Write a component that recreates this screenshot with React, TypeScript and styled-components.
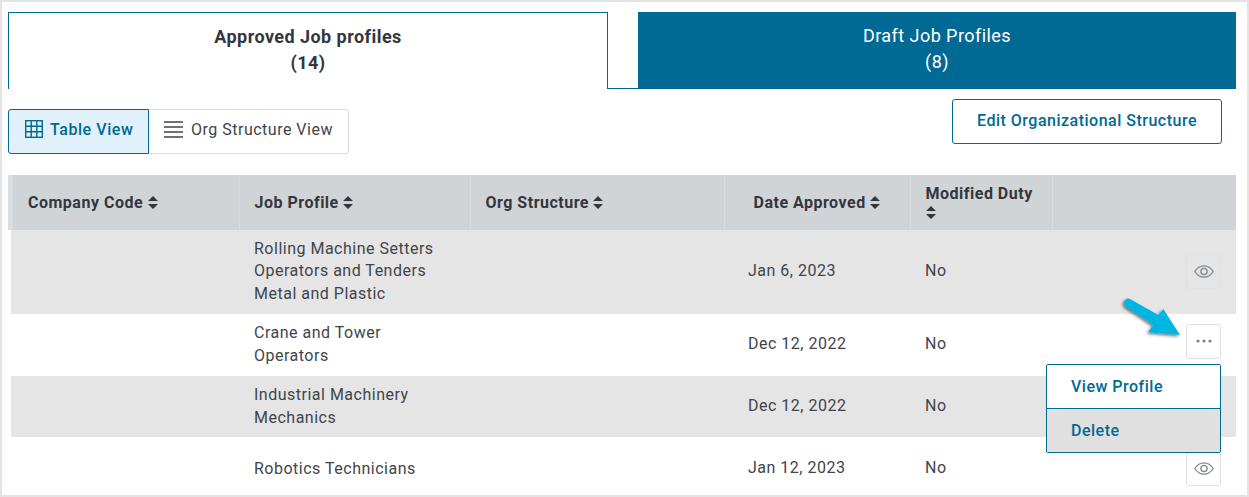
import React from "react";
import styled, { createGlobalStyle } from "styled-components";

const Global = createGlobalStyle`
  html, body { margin: 0; padding: 0; background: #fff; }
  body { font-family: Roboto, "Liberation Sans", sans-serif; color: #33373d; }
  * { box-sizing: border-box; }
`;

const Frame = styled.div`
  position: relative;
  width: 1249px;
  height: 497px;
  border: 2px solid #e3e3e3;
  padding: 10px 11px 0 6px;
  overflow: hidden;
  background: #fff;
`;

const Tabs = styled.div`
  display: flex;
  height: 77px;
`;

const ActiveTab = styled.div`
  width: 600px;
  border: 1px solid #006a94;
  border-bottom: 0;
  text-align: center;
  padding-top: 11px;
  font-size: 18px;
  line-height: 26px;
  font-weight: 700;
  letter-spacing: 0.45px;
  color: #33373d;
`;

const Gap = styled.div`
  width: 30px;
  height: 77px;
  border-bottom: 1px solid #006a94;
`;

const InactiveTab = styled.div`
  flex: 1;
  background: #006a94;
  color: #fff;
  text-align: center;
  padding-top: 11px;
  font-size: 18px;
  line-height: 26px;
  font-weight: 400;
  letter-spacing: 0.45px;
`;

const Toolbar = styled.div`
  display: flex;
  justify-content: space-between;
  align-items: flex-start;
  padding: 20px 14px 0 0;
  height: 86px;
`;

const Toggle = styled.div`
  display: flex;
`;

const ToggleButton = styled.div<{ $active?: boolean }>`
  display: flex;
  align-items: center;
  gap: ${(p) => (p.$active ? "7px" : "8px")};
  height: 45px;
  padding-bottom: 5px;
  font-size: 16px;
  letter-spacing: ${(p) => (p.$active ? "0.55px" : "0.5px")};
  padding-left: ${(p) => (p.$active ? "16px" : "15px")};
  width: ${(p) => (p.$active ? "141px" : "200px")};
  color: ${(p) => (p.$active ? "#006a94" : "#3f444a")};
  font-weight: ${(p) => (p.$active ? 500 : 400)};
  background: ${(p) => (p.$active ? "#e1f1fb" : "#fff")};
  border: 1px solid ${(p) => (p.$active ? "#006a94" : "#d9dcdf")};
  border-left-width: ${(p) => (p.$active ? "1px" : "0")};
  border-radius: ${(p) => (p.$active ? "3px 0 0 3px" : "0 3px 3px 0")};
`;

const EditButton = styled.div`
  width: 270px;
  height: 45px;
  margin-top: -10px;
  padding-bottom: 2px;
  border: 1px solid #006a94;
  border-radius: 3px;
  color: #006a94;
  font-size: 16px;
  font-weight: 500;
  letter-spacing: 0.5px;
  display: flex;
  align-items: center;
  justify-content: center;
`;

const Table = styled.table`
  width: 1228px;
  border-collapse: collapse;
  table-layout: fixed;
  font-size: 16px;
  letter-spacing: 0.5px;
`;

const HeadRow = styled.tr`
  height: 55px;
  background: #d1d4d7;
`;

const Th = styled.th<{ $pad?: number; $tight?: boolean }>`
  text-align: left;
  padding: 0 0 0 ${(p) => p.$pad ?? 15}px;
  font-size: 16px;
  line-height: ${(p) => (p.$tight ? "19px" : "22px")};
  font-weight: 700;
  color: #33373d;
  border-left: 1px solid #dadcdf;
  &:first-child {
    border-left: 0;
    padding-left: 20px;
    background: linear-gradient(to right, #dadcde 5px, #d1d4d7 5px);
  }
`;

const Row = styled.tr<{ $shade?: boolean; $h: number }>`
  height: ${(p) => p.$h}px;
  background: ${(p) => (p.$shade ? "#e5e5e5" : "#fff")};
`;

const Td = styled.td<{ $pad?: number; $dy?: number; $lh?: number }>`
  padding: ${(p) => Math.max(p.$dy ?? 0, 0) * 2}px 0 ${(p) => Math.max(-(p.$dy ?? 0), 0) * 2}px ${(p) => p.$pad ?? 15}px;
  line-height: ${(p) => p.$lh ?? 23}px;
  color: #3f444a;
  vertical-align: middle;
`;

const BlankCell = styled.td<{ $shade?: boolean }>`
  padding: 0;
  background: ${(p) => (p.$shade ? "linear-gradient(to right, #fff 3px, #e5e5e5 3px)" : "#fff")};
`;

const ActionCell = styled.td`
  padding: 0 15px 0 0;
  text-align: right;
  vertical-align: middle;
`;

const IconButton = styled.div<{ $top?: number }>`
  display: inline-flex;
  width: 35px;
  height: 35px;
  align-items: center;
  justify-content: center;
  border: 1px solid #dfe1e3;
  border-radius: 3px;
  vertical-align: middle;
  position: relative;
  top: ${(p) => p.$top ?? 0}px;
`;

const Menu = styled.div`
  position: absolute;
  left: 1044px;
  top: 362px;
  width: 175px;
  height: 89px;
  border: 1px solid #006a94;
  border-radius: 2px;
  background: #fff;
  overflow: hidden;
`;

const MenuItem = styled.div<{ $hover?: boolean }>`
  height: ${(p) => (p.$hover ? "44px" : "43px")};
  padding-left: 24px;
  display: flex;
  align-items: center;
  font-size: 16px;
  font-weight: 500;
  letter-spacing: 0.5px;
  color: #006a94;
  background: ${(p) => (p.$hover ? "#e0e0e0" : "#fff")};
  border-top: ${(p) => (p.$hover ? "1px solid #006a94" : "0")};
`;

const Arrow = styled.svg`
  position: absolute;
  left: 1118px;
  top: 292px;
  overflow: visible;
`;

const SortIcon = styled.svg`
  display: inline-block;
  vertical-align: -1px;
`;

const Sort = () => (
  <SortIcon width="10" height="13" viewBox="0 0 10 13">
    <path d="M5 0 L10 5 H0 Z M0 8 H10 L5 13 Z" fill="#33373d" />
  </SortIcon>
);

const Eye = () => (
  <svg width="20" height="13" viewBox="0 0 20 13" fill="none" stroke="#7e868c" strokeWidth="1.3">
    <path d="M0.8 6.5 C4 1.4 7.2 0.8 10 0.8 C12.8 0.8 16 1.4 19.2 6.5 C16 11.6 12.8 12.2 10 12.2 C7.2 12.2 4 11.6 0.8 6.5 Z" />
    <circle cx="10" cy="6.5" r="3.1" />
  </svg>
);

const Dots = () => (
  <svg width="16" height="4" viewBox="0 0 16 4" fill="#7d8287">
    <circle cx="2" cy="2" r="1.6" />
    <circle cx="8" cy="2" r="1.6" />
    <circle cx="14" cy="2" r="1.6" />
  </svg>
);

const GridIcon = () => (
  <svg width="18" height="18" viewBox="0 0 18 18" fill="none" stroke="#006a94" strokeWidth="1.4">
    <rect x="0.7" y="0.7" width="16.6" height="16.6" />
    <path d="M6.2 0.7 V17.3 M11.8 0.7 V17.3 M0.7 6.2 H17.3 M0.7 11.8 H17.3" />
  </svg>
);

const LinesIcon = () => (
  <svg width="19" height="17" viewBox="0 0 19 17" fill="none" stroke="#3f444a" strokeWidth="1.3">
    <path d="M0 1 H19 M0 6 H19 M0 11 H19 M0 16 H19" />
  </svg>
);

const App = () => (
  <>
    <Global />
    <Frame>
      <Tabs>
        <ActiveTab>
          Approved Job profiles
          <br />
          (14)
        </ActiveTab>
        <Gap />
        <InactiveTab>
          Draft Job Profiles
          <br />
          (8)
        </InactiveTab>
      </Tabs>
      <Toolbar>
        <Toggle>
          <ToggleButton $active>
            <GridIcon />
            Table View
          </ToggleButton>
          <ToggleButton>
            <LinesIcon />
            Org Structure View
          </ToggleButton>
        </Toggle>
        <EditButton>Edit Organizational Structure</EditButton>
      </Toolbar>
      <Table>
        <colgroup>
          <col style={{ width: 231 }} />
          <col style={{ width: 231 }} />
          <col style={{ width: 254 }} />
          <col style={{ width: 186 }} />
          <col style={{ width: 142 }} />
          <col />
        </colgroup>
        <thead>
          <HeadRow>
            <Th>
              Company Code <Sort />
            </Th>
            <Th>
              Job Profile <Sort />
            </Th>
            <Th>
              Org Structure <Sort />
            </Th>
            <Th $pad={29}>
              Date Approved <Sort />
            </Th>
            <Th $tight>
              Modified Duty
              <br />
              <Sort />
            </Th>
            <Th />
          </HeadRow>
        </thead>
        <tbody>
          <Row $shade $h={84}>
            <BlankCell $shade />
            <Td $lh={22.5} $dy={-0.5}>
              Rolling Machine Setters
              <br />
              Operators and Tenders
              <br />
              Metal and Plastic
            </Td>
            <Td />
            <Td $pad={24} $dy={-2}>Jan 6, 2023</Td>
            <Td $dy={-2}>No</Td>
            <ActionCell>
              <IconButton $top={-1}>
                <Eye />
              </IconButton>
            </ActionCell>
          </Row>
          <Row $h={62}>
            <BlankCell />
            <Td $dy={-1}>
              Crane and Tower
              <br />
              Operators
            </Td>
            <Td />
            <Td $pad={24} $dy={-2}>Dec 12, 2022</Td>
            <Td $dy={-2}>No</Td>
            <ActionCell>
              <IconButton $top={-4}>
                <Dots />
              </IconButton>
            </ActionCell>
          </Row>
          <Row $shade $h={61}>
            <BlankCell $shade />
            <Td $dy={-1}>
              Industrial Machinery
              <br />
              Mechanics
            </Td>
            <Td />
            <Td $pad={24} $dy={-1}>Dec 12, 2022</Td>
            <Td $dy={-1}>No</Td>
            <ActionCell />
          </Row>
          <Row $h={58}>
            <BlankCell />
            <Td $dy={2}>Robotics Technicians</Td>
            <Td />
            <Td $pad={24} $dy={1}>Jan 12, 2023</Td>
            <Td $dy={1}>No</Td>
            <ActionCell>
              <IconButton $top={2}>
                <Eye />
              </IconButton>
            </ActionCell>
          </Row>
        </tbody>
      </Table>
      <Menu>
        <MenuItem>View Profile</MenuItem>
        <MenuItem $hover>Delete</MenuItem>
      </Menu>
      <Arrow width="60" height="44" viewBox="0 0 60 44">
        <defs>
          <filter id="arrowShadow" x="-30%" y="-30%" width="160%" height="160%">
            <feDropShadow dx="-1.5" dy="1.5" stdDeviation="1.5" floodColor="#000" floodOpacity="0.55" />
          </filter>
        </defs>
        <path
          d="M9.5 4.8 L38.3 21 L43.3 15 L60 41 L28.3 38.3 L33.3 31 L6.5 13 Q3 10 4.5 7 Q6.5 3.5 9.5 4.8 Z"
          fill="#00b5e2"
          filter="url(#arrowShadow)"
        />
      </Arrow>
    </Frame>
  </>
);

export default App;
